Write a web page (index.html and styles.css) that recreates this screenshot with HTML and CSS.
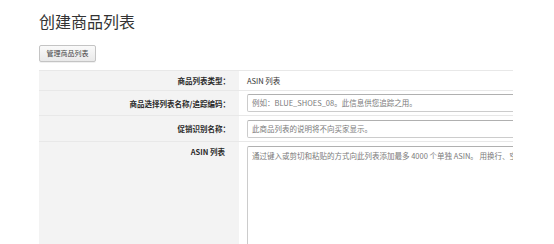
FILE: index.html
```html
<!DOCTYPE html>
<html lang="zh-CN">
<head>
<meta charset="utf-8">
<title>创建商品列表</title>
<link rel="stylesheet" href="styles.css">
</head>
<body>
<div class="page">
  <h1 class="title">创建商品列表</h1>
  <button class="btn" type="button">管理商品列表</button>
  <div class="form">
    <div class="row r1">
      <div class="label">商品列表类型：</div>
      <div class="value"><span class="static">ASIN 列表</span></div>
    </div>
    <div class="row r2">
      <div class="label">商品选择列表名称/追踪编码：</div>
      <div class="value"><div class="input">例如：BLUE_SHOES_08。此信息供您追踪之用。</div></div>
    </div>
    <div class="row r3">
      <div class="label">促销识别名称：</div>
      <div class="value"><div class="input">此商品列表的说明将不向买家显示。</div></div>
    </div>
    <div class="row r4">
      <div class="label top">ASIN 列表</div>
      <div class="value"><div class="textarea">通过键入或剪切和粘贴的方式向此列表添加最多 4000 个单独 ASIN。 用换行、空格或逗号分隔各个 ASIN。</div></div>
    </div>
  </div>
</div>
</body>
</html>
```
FILE: styles.css
```css
html, body {
  margin: 0;
  padding: 0;
  background: #ffffff;
}
body {
  font-family: "Noto Sans CJK SC", "Liberation Sans", sans-serif;
  color: #333333;
  overflow: hidden;
  height: 244px;
}
.page {
  padding: 0 0 0 39px;
  width: 474px;
  height: 244px;
  overflow: hidden;
}
.title {
  margin: 0;
  padding-top: 11px;
  font-size: 16px;
  line-height: 20px;
  font-weight: normal;
  color: #333333;
  height: 20px;
}
.btn {
  display: block;
  margin-top: 14px;
  height: 17px;
  width: 57px;
  padding: 0;
  font-family: "Noto Sans CJK SC", sans-serif;
  font-size: 7px;
  line-height: 15px;
  color: #444444;
  background: linear-gradient(#fafafa, #e9e9e9);
  border: 1px solid #c4c4c4;
  border-radius: 2px;
  box-shadow: 0 1px 0 rgba(0,0,0,0.06);
}
.form {
  margin-top: 8px;
  width: 474px;
  border-top: 1px solid #e8e8e8;
  overflow: hidden;
}
.row {
  display: flex;
  border-bottom: 1px solid #e8e8e8;
}
.r1 { height: 19px; }
.r2 { height: 24px; }
.r3 { height: 25px; }
.r4 { height: 110px; border-bottom: none; }
.label {
  width: 200px;
  flex: none;
  background: #f3f3f3;
  font-size: 7.5px;
  font-weight: bold;
  color: #2a2a2a;
  text-align: right;
  padding-right: 9px;
  box-sizing: border-box;
  display: flex;
  align-items: center;
  justify-content: flex-end;
}
.label.top {
  align-items: flex-start;
  padding-top: 4px;
  padding-right: 14px;
}
.value {
  flex: 1;
  display: flex;
  align-items: center;
  padding-left: 8px;
  min-width: 0;
}
.static {
  font-size: 7.5px;
  color: #333333;
}
.input {
  width: 300px;
  flex: none;
  height: 18px;
  box-sizing: border-box;
  border: 1px solid #cccccc;
  border-top-color: #b0b0b0;
  border-radius: 2px;
  font-size: 7.5px;
  line-height: 16px;
  color: #7a7a7a;
  padding-left: 4px;
  white-space: nowrap;
  overflow: hidden;
}
.r4 .value {
  align-items: flex-start;
  padding-top: 4px;
}
.textarea {
  width: 300px;
  flex: none;
  height: 130px;
  box-sizing: border-box;
  border: 1px solid #cccccc;
  border-top-color: #b0b0b0;
  border-radius: 2px;
  font-size: 7.5px;
  line-height: 12px;
  color: #7a7a7a;
  padding: 3px 4px;
  white-space: nowrap;
  overflow: hidden;
}
```
